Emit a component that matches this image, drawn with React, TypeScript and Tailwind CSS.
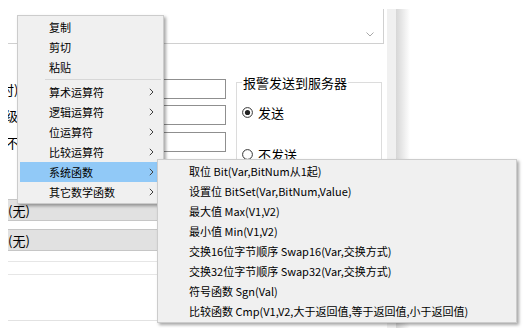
import React from "react";

const Chevron = () => (
  <svg width="5" height="8" viewBox="0 0 5 8" className="shrink-0">
    <path d="M0.8 0.8 L4 4 L0.8 7.2" fill="none" stroke="#404040" strokeWidth="1" />
  </svg>
);

type Item = { label: string; sub?: boolean; active?: boolean };

const mainItems1: Item[] = [{ label: "复制" }, { label: "剪切" }, { label: "粘贴" }];
const mainItems2: Item[] = [
  { label: "算术运算符", sub: true },
  { label: "逻辑运算符", sub: true },
  { label: "位运算符", sub: true },
  { label: "比较运算符", sub: true },
  { label: "系统函数", sub: true, active: true },
  { label: "其它数学函数", sub: true },
];

const subItems = [
  "取位 Bit(Var,BitNum从1起)",
  "设置位 BitSet(Var,BitNum,Value)",
  "最大值 Max(V1,V2)",
  "最小值 Min(V1,V2)",
  "交换16位字节顺序 Swap16(Var,交换方式)",
  "交换32位字节顺序 Swap32(Var,交换方式)",
  "符号函数 Sgn(Val)",
  "比较函数 Cmp(V1,V2,大于返回值,等于返回值,小于返回值)",
];

function MenuRow({ item }: { item: Item }) {
  return (
    <div
      className={
        "h-[20px] flex items-center pl-[29px] pr-[9px] text-[11px] leading-none whitespace-nowrap " +
        (item.active ? "bg-[#91c9f7]" : "")
      }
    >
      <span>{item.label}</span>
      {item.sub && (
        <span className="ml-auto flex items-center">
          <Chevron />
        </span>
      )}
    </div>
  );
}

function Radio({ checked }: { checked?: boolean }) {
  return (
    <svg width="11" height="11" viewBox="0 0 11 11" className="shrink-0">
      <circle cx="5.5" cy="5.5" r="4.9" fill="white" stroke="#333" strokeWidth="1" />
      {checked && <circle cx="5.5" cy="5.5" r="2.6" fill="#222" />}
    </svg>
  );
}

export default function App() {
  return (
    <div className="relative w-[524px] h-[328px] overflow-hidden bg-white text-black font-['Noto_Sans_CJK_SC','Noto_Sans',sans-serif]">
      {/* background dialog */}
      <div className="flex h-full pt-[9px]">
        <div className="w-[8px] shrink-0" />
        <div className="w-[376px] shrink-0 overflow-hidden flex flex-col">
          {/* top multiline box */}
          <div className="h-[35px] shrink-0 border-r border-b border-[#d0d0d0] flex items-end justify-end pb-[6px] pr-[9px]">
            <svg width="8" height="5" viewBox="0 0 8 5">
              <path d="M0.5 0.5 L4 4 L7.5 0.5" fill="none" stroke="#a8a8a8" strokeWidth="1" />
            </svg>
          </div>

          {/* form area */}
          <div className="mt-[30px] h-[120px] shrink-0 flex items-start">
            <div className="w-[218px] shrink-0 pt-[5px] flex flex-col text-[13px]">
              <div className="h-[20px] flex items-center">
                <span className="ml-[-7px] whitespace-nowrap leading-none">时)</span>
                <div className="ml-auto w-[150px] h-[20px] border border-[#8f8f8f] bg-white" />
              </div>
              <div className="mt-[6px] h-[20px] flex items-center">
                <span className="ml-[-3px] whitespace-nowrap leading-none">级</span>
                <div className="ml-auto w-[150px] h-[20px] border border-[#8f8f8f] bg-white" />
              </div>
              <div className="mt-[7px] h-[20px] flex items-center">
                <span className="ml-[-2px] whitespace-nowrap leading-none">不</span>
                <div className="ml-auto w-[150px] h-[20px] border border-[#8f8f8f] bg-white" />
              </div>
            </div>

            <fieldset className="ml-[10px] w-[146px] h-[120px] border border-[#dcdcdc] pl-[5px] text-[13px]">
              <legend className="px-[1px] leading-[17px]">报警发送到服务器</legend>
              <div className="mt-[13px] h-[17px] flex items-center">
                <Radio checked />
                <span className="ml-[5px] leading-none">发送</span>
              </div>
              <div className="mt-[25px] h-[17px] flex items-center">
                <Radio />
                <span className="ml-[5px] leading-none">不发送</span>
              </div>
            </fieldset>
          </div>

          {/* combo bars */}
          <div className="mt-[5px] ml-[-4px] w-[340px] h-[22px] shrink-0 bg-[#e1e1e1] border border-[#c6c6c6] flex items-center pl-[3px] text-[13px] leading-none">
            (无)
          </div>
          <div className="mt-[8px] ml-[-4px] w-[340px] h-[22px] shrink-0 bg-[#e1e1e1] border border-[#c6c6c6] flex items-center pl-[3px] text-[13px] leading-none">
            (无)
          </div>

          <div className="mt-[10px] h-px shrink-0 bg-[#e6e6e6]" />
          <div className="mt-[12px] h-px shrink-0 bg-[#e6e6e6]" />
          <div className="mt-[45px] h-px shrink-0 bg-[#e2e2e2]" />
        </div>
        <div className="w-[3px] shrink-0" />
        <div className="w-[9px] shrink-0 bg-[#f0f0f0]" />
        <div className="w-[14px] shrink-0 bg-linear-to-r from-[#d6d6d6] to-white" />
      </div>

      {/* main context menu */}
      <div className="absolute left-[17px] top-[15px] w-[147px] border border-[#cccccc] bg-[#f0f0f0] pt-[1px] pb-[1px] pl-[2px] shadow-[2px_2px_3px_rgba(0,0,0,0.35)]">
        {mainItems1.map((it) => (
          <MenuRow key={it.label} item={it} />
        ))}
        <div className="h-[5px] flex items-center pl-[25px] pr-[2px]">
          <div className="h-px w-full bg-[#d7d7d7]" />
        </div>
        {mainItems2.map((it) => (
          <MenuRow key={it.label} item={it} />
        ))}
      </div>

      {/* submenu */}
      <div className="absolute left-[157px] top-[159px] w-[360px] border border-[#cccccc] bg-[#f0f0f0] pt-[1px] pb-[1px] pl-[2px] shadow-[2px_2px_3px_rgba(0,0,0,0.35)]">
        {subItems.map((s) => (
          <MenuRow key={s} item={{ label: s }} />
        ))}
      </div>
    </div>
  );
}
